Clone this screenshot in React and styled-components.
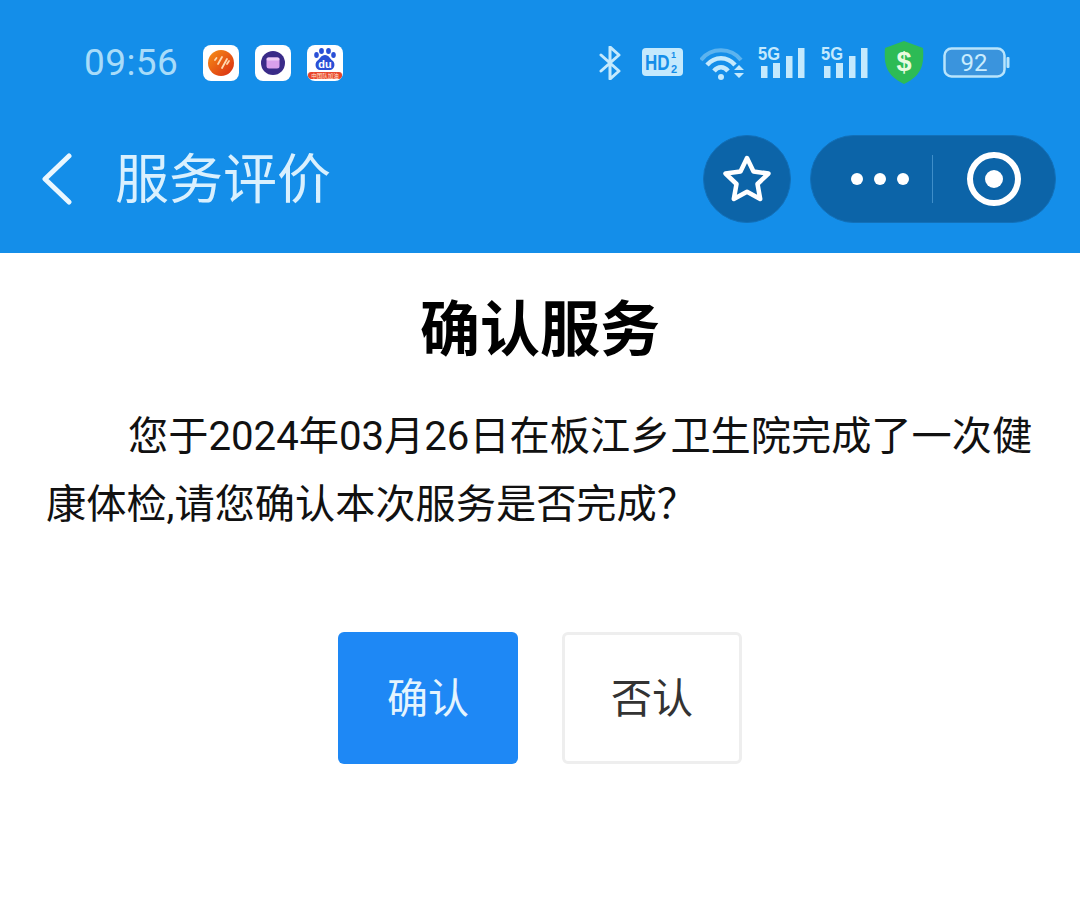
import React from "react";
import styled, { createGlobalStyle } from "styled-components";

const Global = createGlobalStyle`
  html, body { margin: 0; padding: 0; background: #fff; }
  body { font-family: Roboto, "Noto Sans CJK SC", sans-serif; }
  * { box-sizing: border-box; }
`;
const Page = styled.div`width: 1080px; height: 905px; background: #fff; overflow: hidden;`;
const Header = styled.header`height: 253px; background: #148ee9; display: flex; flex-direction: column;`;
const StatusBar = styled.div`height: 135px; padding: 0 70px 10px 84px; display: flex; align-items: center; justify-content: space-between;`;
const StatusLeft = styled.div`display: flex; align-items: center;`;
const Time = styled.span`font-size: 37px; font-weight: 400; color: #a8dcf9; width: 119px; letter-spacing: .4px;`;
const AppIcons = styled.div`display: flex; gap: 16px;`;
const AppIcon = styled.div`width: 36px; height: 36px; border-radius: 8px; background: #fff; overflow: hidden; display: flex;`;
const StatusRight = styled.div`display: flex; align-items: center; gap: 17px; color: #c4e9fd;`;
const Svg = styled.svg`display: block; flex: none;`;
const Nav = styled.nav`flex: 1; padding: 0 24px 30px 40px; display: flex; align-items: center;`;
const Back = styled.div`width: 75px; display: flex;`;
const Title = styled.h1`margin: 0 0 6px; flex: 1; font-family: "Noto Sans CJK SC", sans-serif; font-size: 54px; font-weight: 400; color: #d9f0fe; line-height: 60px;`;
const Capsule = styled.div`height: 88px; background: #0c64a8; border: 1px solid #1270b9; display: flex; align-items: center; justify-content: center;`;
const StarButton = styled(Capsule)`width: 88px; border-radius: 50%; margin-right: 19px;`;
const MenuPill = styled(Capsule)`width: 246px; border-radius: 44px; padding-left: 40px;`;
const Dots = styled.div`display: flex; gap: 11px; width: 82px;`;
const Dot = styled.i`width: 12px; height: 12px; border-radius: 50%; background: #fff;`;
const Divider = styled.div`width: 1px; height: 48px; background: #3f8ec9; margin-right: 34px;`;
const Ring = styled.div`width: 54px; height: 54px; border: 6px solid #fff; border-radius: 50%; display: flex; align-items: center; justify-content: center; margin-right: 34px;`;
const RingDot = styled.div`width: 18px; height: 18px; border-radius: 50%; background: #fff;`;
const Main = styled.main`padding: 0 40px 0 46px;`;
const Heading = styled.h2`margin: 0 6px 0 0; padding-top: 36px; font-family: "Noto Sans CJK SC", sans-serif; font-size: 60px; line-height: 72px; font-weight: 700; text-align: center; color: #000;`;
const Paragraph = styled.p`margin: 42px 0 0; font-size: 40.2px; line-height: 68px; text-indent: 82px; color: #111;`;
const Actions = styled.div`margin: 93px 6px 0 0; display: flex; justify-content: center; gap: 44px;`;
const Button = styled.button`
  width: 180px; height: 132px; border-radius: 6px; font-family: "Noto Sans CJK SC", sans-serif; font-size: 41px; padding: 0 0 6px;
  background: ${p => p.$primary ? "#1e88f5" : "#fff"};
  color: ${p => p.$primary ? "#e4f4fe" : "#333"};
  border: ${p => p.$primary ? "none" : "3px solid #eeeeee"};
`;

const Signal = ({ $tight }) => (
  <Svg width="47" height="36" viewBox="0 0 47 36" style={$tight ? { marginLeft: -1 } : undefined}>
    <rect x="3" y="21" width="6.5" height="12" fill="currentColor"/>
    <rect x="15" y="18" width="7" height="15" fill="currentColor"/>
    <rect x="28" y="11" width="6.500" height="22" fill="currentColor"/>
    <rect x="40" y="3" width="6.500" height="30" fill="currentColor"/>
    <text x="0" y="15" fontFamily="Liberation Sans" fontWeight="700" fontSize="18" fill="currentColor" textLength="22" lengthAdjust="spacingAndGlyphs">5G</text>
  </Svg>
);

export default function App() {
  return (
    <Page>
      <Global />
      <Header>
        <StatusBar>
          <StatusLeft>
            <Time>09:56</Time>
            <AppIcons>
              <AppIcon>
                <Svg width="36" height="36" viewBox="0 0 36 36">
                  <defs><linearGradient id="o" x1="0" y1="0" x2="1" y2="1"><stop offset="0" stopColor="#f79016"/><stop offset="1" stopColor="#d92a12"/></linearGradient></defs>
                  <circle cx="18" cy="18" r="13" fill="url(#o)"/>
                  <path d="M12 15l1.500-2M15 19l4-7M19 23l5-9M24 19l2-3" stroke="#ffd9b0" strokeWidth="1.800" strokeLinecap="round"/>
                </Svg>
              </AppIcon>
              <AppIcon>
                <Svg width="36" height="36" viewBox="0 0 36 36">
                  <circle cx="18" cy="18" r="12" fill="#3a2b88"/>
                  <rect x="11.500" y="12.500" width="13" height="11" rx="2.500" fill="#d9a0ec"/>
                  <rect x="11.500" y="12.500" width="13" height="3" rx="1.500" fill="#eecdf5"/>
                </Svg>
              </AppIcon>
              <AppIcon>
                <Svg width="36" height="36" viewBox="0 0 36 36">
                  <g fill="#2a4fd6">
                    <ellipse cx="9.500" cy="10" rx="2.300" ry="3"/><ellipse cx="14.500" cy="6" rx="2.400" ry="3"/>
                    <ellipse cx="21.500" cy="6" rx="2.400" ry="3"/><ellipse cx="26.500" cy="10" rx="2.300" ry="3"/>
                    <path d="M18 10c4 0 5 4 8 6 3 3 1 9-3 9H13c-4 0-6-6-3-9 3-2 4-6 8-6z"/>
                  </g>
                  <text x="18" y="23" textAnchor="middle" fontFamily="Liberation Sans" fontWeight="700" fontSize="11" fill="#fff">du</text>
                  <rect x="1" y="27" width="34" height="7" rx="3" fill="#e8452c"/>
                  <text x="18" y="33" textAnchor="middle" fontFamily="Noto Sans CJK SC" fontSize="5.500" fill="#ffe4d2">中国队加油</text>
                </Svg>
              </AppIcon>
            </AppIcons>
          </StatusLeft>
          <StatusRight>
            <Svg width="24" height="34" viewBox="0 0 24 34">
              <path d="M3 9l18 16-9 8V1l9 8L3 25" fill="none" stroke="currentColor" strokeWidth="3" strokeLinejoin="round" strokeLinecap="round"/>
            </Svg>
            <Svg width="41" height="29" viewBox="0 0 41 29" style={{ marginLeft: 3 }}>
              <rect width="41" height="28" rx="4" fill="currentColor"/>
              <text transform="translate(3 22) scale(1 1.3)" fontFamily="Liberation Sans" fontWeight="700" fontSize="17" fill="#148ee9">HD</text>
              <text x="29" y="10" fontFamily="Liberation Sans" fontWeight="700" fontSize="9" fill="#148ee9">1</text>
              <text x="29" y="25" fontFamily="Liberation Sans" fontWeight="700" fontSize="11" fill="#148ee9">2</text>
            </Svg>
            <Svg width="46" height="34" viewBox="0 0 46 34" style={{ marginRight: -5 }}>
              <path d="M1 14C11 1 31 1 41 14" fill="none" stroke="#5cb3ef" strokeWidth="4"/>
              <path d="M7 19c8-9 20-9 28 0" fill="none" stroke="currentColor" strokeWidth="4.500"/>
              <path d="M14 25c4-5 10-5 14 0" fill="none" stroke="currentColor" strokeWidth="4.500"/>
              <circle cx="21" cy="31" r="3" fill="currentColor"/>
              <path d="M34 24l5-5 5 5zM34 27l5 5 5-5z" fill="currentColor"/>
            </Svg>
            <Signal />
            <Signal $tight />
            <Svg width="40" height="43" viewBox="0 0 40 43" style={{ marginLeft: -1, marginRight: 2 }}>
              <path d="M20 0l19 7c1 15 0 27-19 36C1 34 0 22 1 7z" fill="#2dbb55"/>
              <text x="20" y="30" textAnchor="middle" fontFamily="Liberation Sans" fontWeight="700" fontSize="27" fill="#e9fbe0">$</text>
            </Svg>
            <Svg width="67" height="31" viewBox="0 0 67 31">
              <rect x="1.500" y="1.500" width="60" height="28" rx="7" fill="#3a94dd" stroke="#b8e4fc" strokeWidth="2.500"/>
              <rect x="63.500" y="10" width="3" height="11" rx="1" fill="#b8e4fc"/>
              <text x="31" y="24" textAnchor="middle" fontFamily="Roboto" fontWeight="400" fontSize="24" fill="#c9ecfe">92</text>
            </Svg>
          </StatusRight>
        </StatusBar>
        <Nav>
          <Back>
            <Svg width="34" height="52" viewBox="0 0 34 52">
              <path d="M29 3L5 26l24 23" fill="none" stroke="#eaf7ff" strokeWidth="5" strokeLinecap="round" strokeLinejoin="round"/>
            </Svg>
          </Back>
          <Title>服务评价</Title>
          <StarButton>
            <Svg width="50" height="50" viewBox="0 0 50 50">
              <path d="M25 4l6.500 13.500 15 2-11 10.500 2.700 15L25 37.800 11.800 45l2.700-15-11-10.500 15-2z" fill="none" stroke="#fff" strokeWidth="4.500" strokeLinejoin="round"/>
            </Svg>
          </StarButton>
          <MenuPill>
            <Dots><Dot/><Dot/><Dot/></Dots>
            <Divider />
            <Ring><RingDot /></Ring>
          </MenuPill>
        </Nav>
      </Header>
      <Main>
        <Heading>确认服务</Heading>
        <Paragraph>{"您于2024年03月26日在板江乡卫生院完成了一次健康体检,请您确认本次服务是否完成\uFF1F"}</Paragraph>
        <Actions>
          <Button $primary>确认</Button>
          <Button>否认</Button>
        </Actions>
      </Main>
    </Page>
  );
}
